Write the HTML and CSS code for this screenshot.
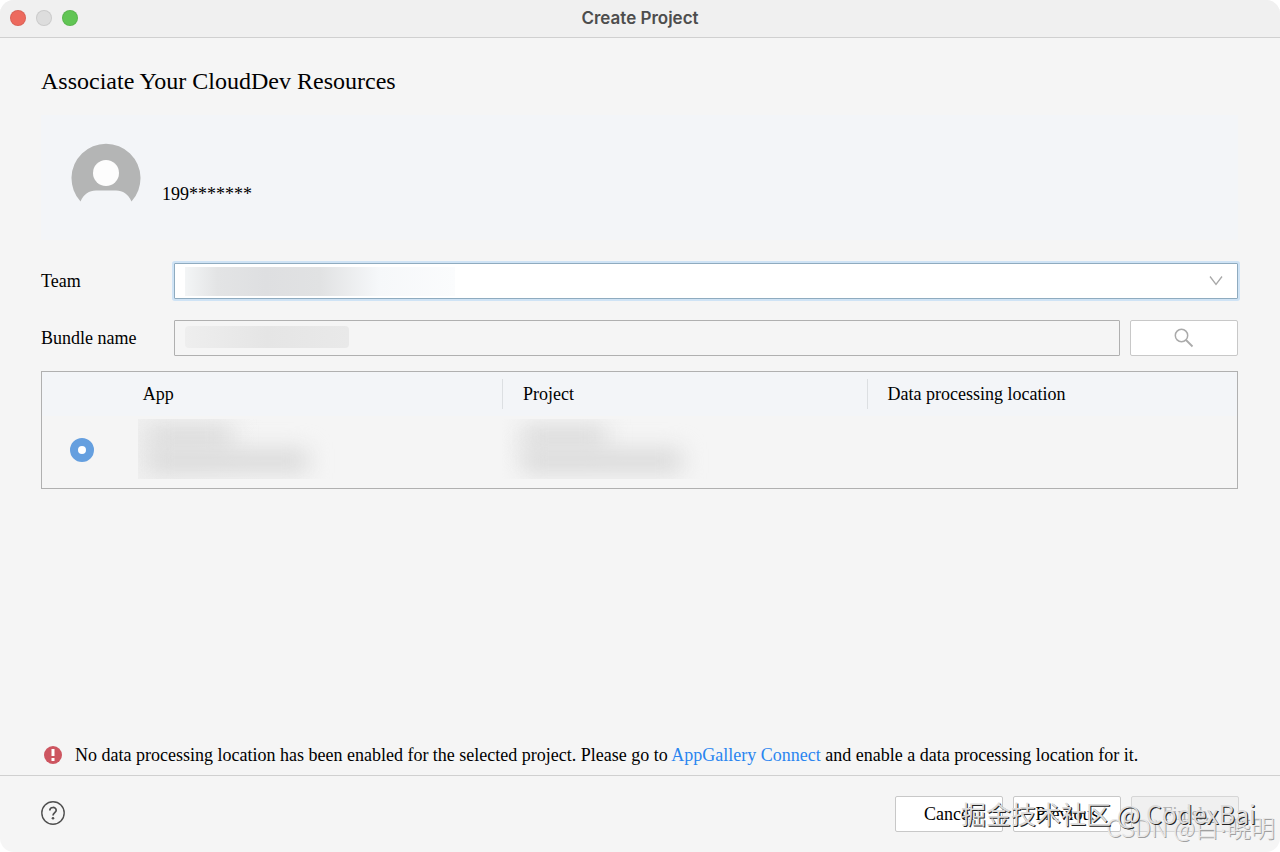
FILE: index.html
```html
<!DOCTYPE html>
<html lang="en">
<head>
    <meta charset="UTF-8">
    <meta name="viewport" content="width=device-width, initial-scale=1.0">
    <title>Create Project</title>
    <link rel="stylesheet" href="styles.css">
</head>
<body>
    <div class="window">
        <header class="title-bar">
            <div class="lights">
                <button class="light close" aria-label="Close"></button>
                <button class="light minimize" aria-label="Minimize" disabled></button>
                <button class="light zoom" aria-label="Zoom"></button>
            </div>
            <div class="window-title">Create Project</div>
        </header>

        <main class="content">
            <h1>Associate Your CloudDev Resources</h1>

            <section class="account">
                <svg class="avatar" width="70" height="62" viewBox="0 0 70 62" aria-hidden="true">
                    <path fill="#b4b5b5" d="M9.5 59.5A34.5 34.5 0 1 1 60.5 59.5C57 52 52 48.5 45 48.5H25C18 48.5 13 52 9.5 59.5Z"/>
                    <circle cx="35" cy="31" r="13" fill="#fdfdfd"/>
                </svg>
                <span class="account-name">199*******</span>
            </section>

            <form class="fields">
                <label for="team">Team</label>
                <div class="field">
                    <select id="team" class="control team">
                        <option></option>
                    </select>
                    <span class="mask mask-team"></span>
                    <svg class="chevron" width="14" height="10" viewBox="0 0 14 10" aria-hidden="true">
                        <path d="M1 0.5L7 8.5L13 0.5" fill="none" stroke="#a8a8a8" stroke-width="1.3"/>
                    </svg>
                </div>

                <label for="bundle">Bundle name</label>
                <div class="bundle-row">
                    <div class="field">
                        <input id="bundle" class="control bundle" type="text" readonly>
                        <span class="mask mask-bundle"></span>
                    </div>
                    <button type="button" class="btn search" aria-label="Search">
                        <svg width="20" height="20" viewBox="0 0 20 20" aria-hidden="true">
                            <circle cx="7.5" cy="7.5" r="6.2" fill="none" stroke="#aaa" stroke-width="1.5"/>
                            <path d="M12 12L18.5 18.5" stroke="#aaa" stroke-width="1.8"/>
                        </svg>
                    </button>
                </div>
            </form>

            <div class="table-box">
                <table>
                    <thead>
                        <tr>
                            <th class="col-pick"></th>
                            <th class="col-app"><span>App</span></th>
                            <th class="col-project"><span>Project</span></th>
                            <th><span>Data processing location</span></th>
                        </tr>
                    </thead>
                    <tbody>
                        <tr>
                            <td class="pick"><input type="radio" name="app" aria-label="Select app" checked></td>
                            <td><div class="masked-cell"><i></i><i></i></div></td>
                            <td><div class="masked-cell"><i></i><i></i></div></td>
                            <td></td>
                        </tr>
                    </tbody>
                </table>
            </div>

            <p class="message">
                <svg width="18" height="18" viewBox="0 0 18 18" aria-hidden="true">
                    <circle cx="9" cy="9" r="9" fill="#cd5560"/>
                    <path d="M7.5 3H10.5V10H7.5ZM7.5 12H10.5V15H7.5Z" fill="#fff"/>
                </svg>
                <span>No data processing location has been enabled for the selected project. Please go to <a href="#">AppGallery Connect</a> and enable a data processing location for it.</span>
            </p>
        </main>

        <footer class="footer">
            <button class="help" aria-label="Help">
                <svg width="24" height="24" viewBox="0 0 24 24" fill="none" stroke="#505050" aria-hidden="true">
                    <circle cx="12" cy="12" r="11.2" stroke-width="1.4"/>
                    <path d="M8.8 9.5C8.8 5.5 15.2 5.5 15.2 9.3C15.2 11.7 12 11.7 12 14.6" stroke-width="1.7"/>
                    <circle cx="12" cy="17.3" r="1.3" fill="#505050" stroke="none"/>
                </svg>
            </button>
            <div class="actions">
                <button class="btn">Cancel</button>
                <button class="btn">Previous</button>
                <button class="btn" disabled>Finish</button>
            </div>
        </footer>

        <div class="watermark blog">CSDN @白<span class="dot">·</span>晓明</div>
        <div class="watermark community">掘金技术社区 @ CodexBai</div>
    </div>
</body>
</html>
```

FILE: styles.css
```css
* {
    box-sizing: border-box;
}

body {
    margin: 0;
    background-color: #fff;
    color: #000;
    font-family: "Liberation Serif", "Times New Roman", serif;
    font-size: 18px;
    line-height: 20px;
}

.window {
    position: relative;
    display: flex;
    flex-direction: column;
    min-height: 100vh;
    background-color: #f5f5f5;
    border-radius: 14px;
    overflow: hidden;
}

/* Title bar */
.title-bar {
    display: grid;
    grid-template-columns: 1fr auto 1fr;
    align-items: center;
    height: 38px;
    padding: 0 10px 2px;
    background-color: #f0f0f0;
    border-bottom: 1px solid #d0d0d0;
}

.lights {
    display: flex;
    gap: 10px;
}

.light {
    width: 16px;
    height: 16px;
    padding: 0;
    border: 1px solid rgba(0, 0, 0, 0.08);
    border-radius: 50%;
}

.close {
    background-color: #ed6a5e;
}

.minimize {
    background-color: #dddddd;
}

.zoom {
    background-color: #61c554;
}

.window-title {
    color: #4d4d4d;
    font-family: Inter, "Liberation Sans", sans-serif;
    font-size: 17px;
    font-weight: 600;
}

/* Content */
.content {
    flex: 1;
    display: flex;
    flex-direction: column;
    padding: 28px 42px 10px 41px;
}

h1 {
    margin: 0 0 19px;
    font-size: 24px;
    font-weight: 400;
    line-height: 30px;
}

.account {
    display: flex;
    align-items: flex-end;
    gap: 21px;
    height: 125px;
    padding: 0 30px 36px;
    background-color: #f3f5f8;
}

.account-name {
    line-height: 20px;
}

.fields {
    display: grid;
    grid-template-columns: 112px 1fr;
    align-items: center;
    gap: 21px;
    margin: 23px 0 15px;
}

.field {
    position: relative;
    flex: 1;
}

.control {
    display: block;
    width: 100%;
    height: 36px;
    padding: 0 12px;
    border: 1px solid #b0b0b0;
    border-radius: 1px;
    background-color: #f5f5f5;
    font: inherit;
    outline: none;
}

.team {
    appearance: none;
    background-color: #fff;
    border-color: #8fabbf;
    box-shadow: 0 0 0 2px #cfe3f5;
}

.chevron {
    position: absolute;
    top: 13px;
    right: 15px;
    pointer-events: none;
}

.mask {
    position: absolute;
    left: 11px;
    pointer-events: none;
}

.mask-team {
    top: 4px;
    bottom: 3px;
    width: 270px;
    background: linear-gradient(90deg, #f3f5f6, #e3e4e5 12%, #dedfe1 30%, #e1e2e3 50%, #f6f8fa 72%, #fbfcfd);
}

.mask-bundle {
    top: 6px;
    width: 164px;
    height: 22px;
    border-radius: 4px;
    background: linear-gradient(90deg, #eeeeee, #e5e5e5 50%, #e9e9e9);
}

.bundle-row {
    display: flex;
    gap: 10px;
}

.btn {
    width: 108px;
    height: 36px;
    padding: 0;
    border: 1px solid #c8c8c8;
    border-radius: 2px;
    background-color: #fff;
    color: #000;
    font: inherit;
}

.btn:disabled {
    border-color: #d6d6d6;
    background-color: #f0f0f0;
    color: #b0b0b0;
}

.search {
    display: flex;
    align-items: center;
    justify-content: center;
}

/* App table */
.table-box {
    border: 1px solid #b0b0b0;
}

table {
    width: 100%;
    border-collapse: collapse;
    table-layout: fixed;
}

th {
    height: 44px;
    padding: 0;
    background-color: #f3f5f8;
    font-weight: 400;
    text-align: left;
}

th span {
    display: block;
    padding: 5px 20px;
    border-left: 1px solid #dcdfe2;
}

.col-pick {
    width: 7%;
}

.col-app {
    width: 31.5%;
}

.col-app span {
    padding-left: 17px;
    border-left: 0;
}

.col-project {
    width: 30.5%;
}

td {
    height: 72px;
    padding: 0;
}

.pick {
    padding: 0 0 4px 28px;
    line-height: 0;
}

.pick input {
    appearance: none;
    width: 24px;
    height: 24px;
    margin: 0;
    border: 8px solid #659fdf;
    border-radius: 50%;
    background-color: #fff;
}

.masked-cell {
    width: 208px;
    height: 60px;
    margin-left: 12px;
    margin-bottom: 6px;
    padding: 6px 10px;
    overflow: hidden;
    background: linear-gradient(90deg, #f0f0f0, #f5f5f5 60%);
}

td + td + td .masked-cell {
    margin-left: 0;
    padding-left: 20px;
    background: none;
}

.masked-cell i {
    display: block;
    width: 84px;
    height: 24px;
    background-color: #dcdcdc;
    filter: blur(11px);
}

.masked-cell i + i {
    width: 160px;
    background-color: #dadada;
}

/* Message */
.message {
    display: flex;
    align-items: center;
    gap: 13px;
    margin: auto 0 0;
    padding-left: 3px;
}

.message svg {
    flex: none;
}

a {
    color: #2a85f0;
    text-decoration: none;
}

/* Footer */
.footer {
    display: flex;
    align-items: center;
    justify-content: space-between;
    height: 77px;
    padding: 0 41px;
    border-top: 1px solid #d0d0d0;
}

.help {
    display: flex;
    padding: 0 0 2px;
    border: 0;
    background: none;
}

.actions {
    display: flex;
    gap: 10px;
}

/* Watermarks lie over the footer */
.watermark {
    position: absolute;
    white-space: nowrap;
    pointer-events: none;
}

.community {
    right: 24px;
    bottom: 24px;
    color: #dcdcdc;
    font: 25px/30px "Noto Sans CJK SC", sans-serif;
    text-shadow: 1px 1px 0 #222;
}

.blog {
    right: 5px;
    bottom: 8px;
    color: #e8e8e8;
    font: 300 24px/30px "Noto Sans CJK SC", sans-serif;
    text-shadow: 1px 1px 0 #a0a0a0;
}

.dot {
    font-family: "Liberation Sans", sans-serif;
}
```
